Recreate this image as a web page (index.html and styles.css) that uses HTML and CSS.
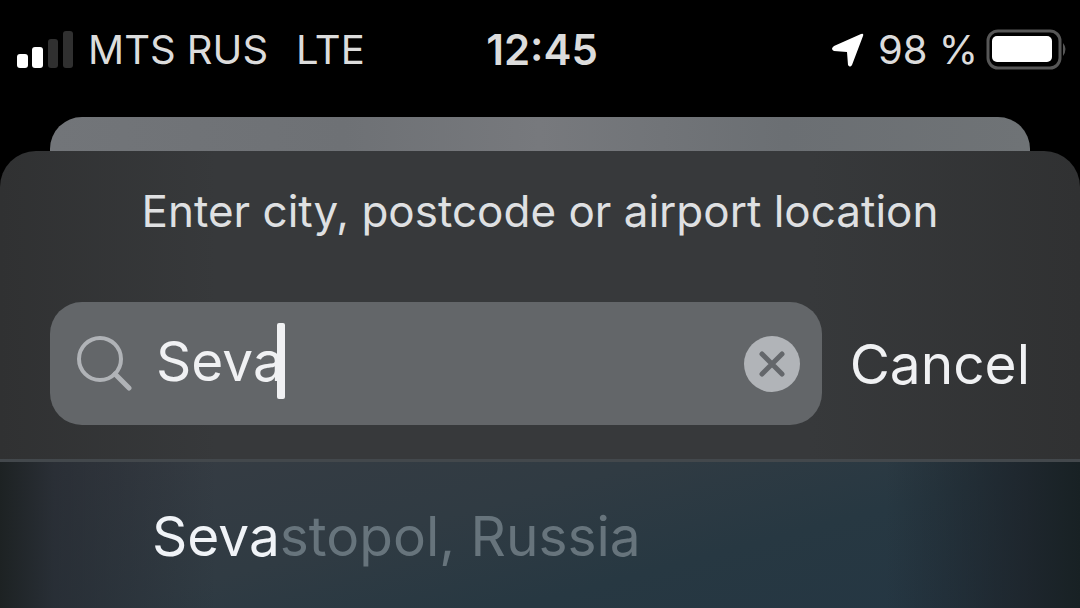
FILE: index.html
```html
<!DOCTYPE html>
<html lang="en">
<head>
<meta charset="utf-8">
<meta name="viewport" content="width=device-width, initial-scale=1">
<title>Add location</title>
<link rel="stylesheet" href="styles.css">
</head>
<body>
<header class="status">
  <div class="status-side">
    <svg class="signal" viewBox="0 0 58 38" role="img" aria-label="Signal: 2 of 4 bars">
      <rect x="1" y="23" width="11" height="14" rx="3" fill="#fff"/>
      <rect x="16" y="16" width="11" height="21" rx="3" fill="#fff"/>
      <rect x="32" y="8" width="10" height="29" rx="3" fill="#303030"/>
      <rect x="47" y="0" width="10" height="37" rx="3" fill="#303030"/>
    </svg>
    <span class="carrier">MTS RUS</span>
    <span class="network">LTE</span>
  </div>
  <time class="clock">12:45</time>
  <div class="status-side status-end">
    <svg class="arrow" viewBox="0 0 34 34" aria-hidden="true">
      <path d="M33 3 L22 32 Q20 35 18 32 L17 19 L4 18 Q0 16 4 13 L31 1 Q34 0 33 3Z" fill="#fff"/>
    </svg>
    <span class="charge">98 %</span>
    <svg class="battery" viewBox="0 0 82 42" aria-hidden="true">
      <rect x="2" y="2" width="72" height="37" rx="10" fill="none" stroke="#575757" stroke-width="3"/>
      <rect x="6" y="7" width="60" height="26" rx="5" fill="#fff"/>
      <path d="M77 14 Q82 20 77 27Z" fill="#575757"/>
    </svg>
  </div>
</header>
<div class="back-card"></div>
<main class="sheet">
  <section class="search">
    <label class="prompt" for="place">Enter city, postcode or airport location</label>
    <form class="row">
      <div class="field">
        <svg class="glass" viewBox="0 0 56 56" fill="none" stroke="#b0b3b7" stroke-width="4" stroke-linecap="round" aria-hidden="true">
          <circle cx="24" cy="23" r="21"/>
          <path d="M39 38 L53 52" stroke-width="5"/>
        </svg>
        <div class="entry">
          <input class="input" id="place" type="text" value="Seva" autocomplete="off" spellcheck="false">
          <span class="caret"></span>
        </div>
        <button class="clear" type="button" aria-label="Clear text">
          <svg viewBox="0 0 56 56" aria-hidden="true">
            <circle cx="28" cy="28" r="28" fill="#b1b4b8"/>
            <path d="M18 18 L38 38 M38 18 L18 38" stroke="#64676b" stroke-width="5" stroke-linecap="round"/>
          </svg>
        </button>
      </div>
      <button class="cancel" type="button">Cancel</button>
    </form>
  </section>
  <section class="results">
    <a class="result" href="#sevastopol"><span class="match">Seva</span>stopol, Russia</a>
  </section>
</main>
</body>
</html>
```
FILE: styles.css
```css
* {
  box-sizing: border-box;
}

body {
  margin: 0;
  min-height: 100vh;
  display: flex;
  flex-direction: column;
  background: #000;
  color: #f0f1f3;
  font-family: Inter, "Liberation Sans", sans-serif;
}

svg {
  display: block;
  flex: none;
}

button,
input {
  font: inherit;
  color: inherit;
  padding: 0;
  border: 0;
  background: none;
}

.status {
  display: grid;
  grid-template-columns: 1fr auto 1fr;
  align-items: center;
  padding: 24px 12px 41px 16px;
  font-size: 40px;
  line-height: 52px;
  color: #dcdcdc;
  white-space: nowrap;
}

.status-side {
  display: flex;
  align-items: center;
}

.status-end {
  justify-content: flex-end;
}

.signal {
  width: 58px;
}

.carrier {
  margin-left: 14px;
}

.network {
  margin-left: 28px;
}

.clock {
  font-size: 42px;
  font-weight: 600;
}

.arrow {
  width: 34px;
}

.charge {
  margin: 0 8px 0 14px;
}

.battery {
  width: 82px;
}

.back-card {
  height: 34px;
  margin: 0 50px;
  border-radius: 32px 32px 0 0;
  background: linear-gradient(90deg, #727579, #6e7175 30%, #77797d 50%, #6b6f73 75%, #6f7376);
}

.sheet {
  flex: 1;
  display: flex;
  flex-direction: column;
  border-radius: 36px 36px 0 0;
  overflow: hidden;
}

.search {
  padding: 32px 50px 34px;
  background: linear-gradient(90deg, #303132, #37393b 20%, #37393b 75%, #303132);
  border-bottom: 3px solid #43484c;
}

.prompt {
  display: block;
  line-height: 56px;
  font-size: 44px;
  text-align: center;
  color: #dfe0e2;
}

.row {
  display: flex;
  align-items: center;
  gap: 28px;
  margin: 63px 0 0;
}

.field {
  flex: 1;
  min-width: 0;
  height: 123px;
  display: flex;
  align-items: center;
  padding: 0 22px 0 26px;
  border-radius: 32px;
  background: #636669;
}

.glass {
  width: 56px;
}

.entry {
  position: relative;
  flex: 1;
  min-width: 0;
  margin-left: 24px;
  padding-bottom: 6px;
}

.input {
  display: block;
  width: 100%;
  height: 76px;
  font-size: 55px;
  outline: 0;
}

.caret {
  position: absolute;
  top: 0;
  left: 121px;
  width: 8px;
  height: 76px;
  border-radius: 2px;
  background: #f0f1f3;
}

.clear svg {
  width: 56px;
}

.cancel {
  font-size: 55px;
}

.results {
  flex: 1;
  padding: 36px 50px 32px 152px;
  background:
    linear-gradient(90deg, #1d2223, #22262d99 5%, #22262d00 20%, #1c253000 82%, #1c2228cc 95%, #182124),
    linear-gradient(165deg, #373c43, #303b43 40%, #273842 65%, #243643);
}

.result {
  display: block;
  font-size: 55px;
  line-height: 76px;
  color: #67747c;
  text-decoration: none;
}

.match {
  color: #f0f3f7;
}
```
